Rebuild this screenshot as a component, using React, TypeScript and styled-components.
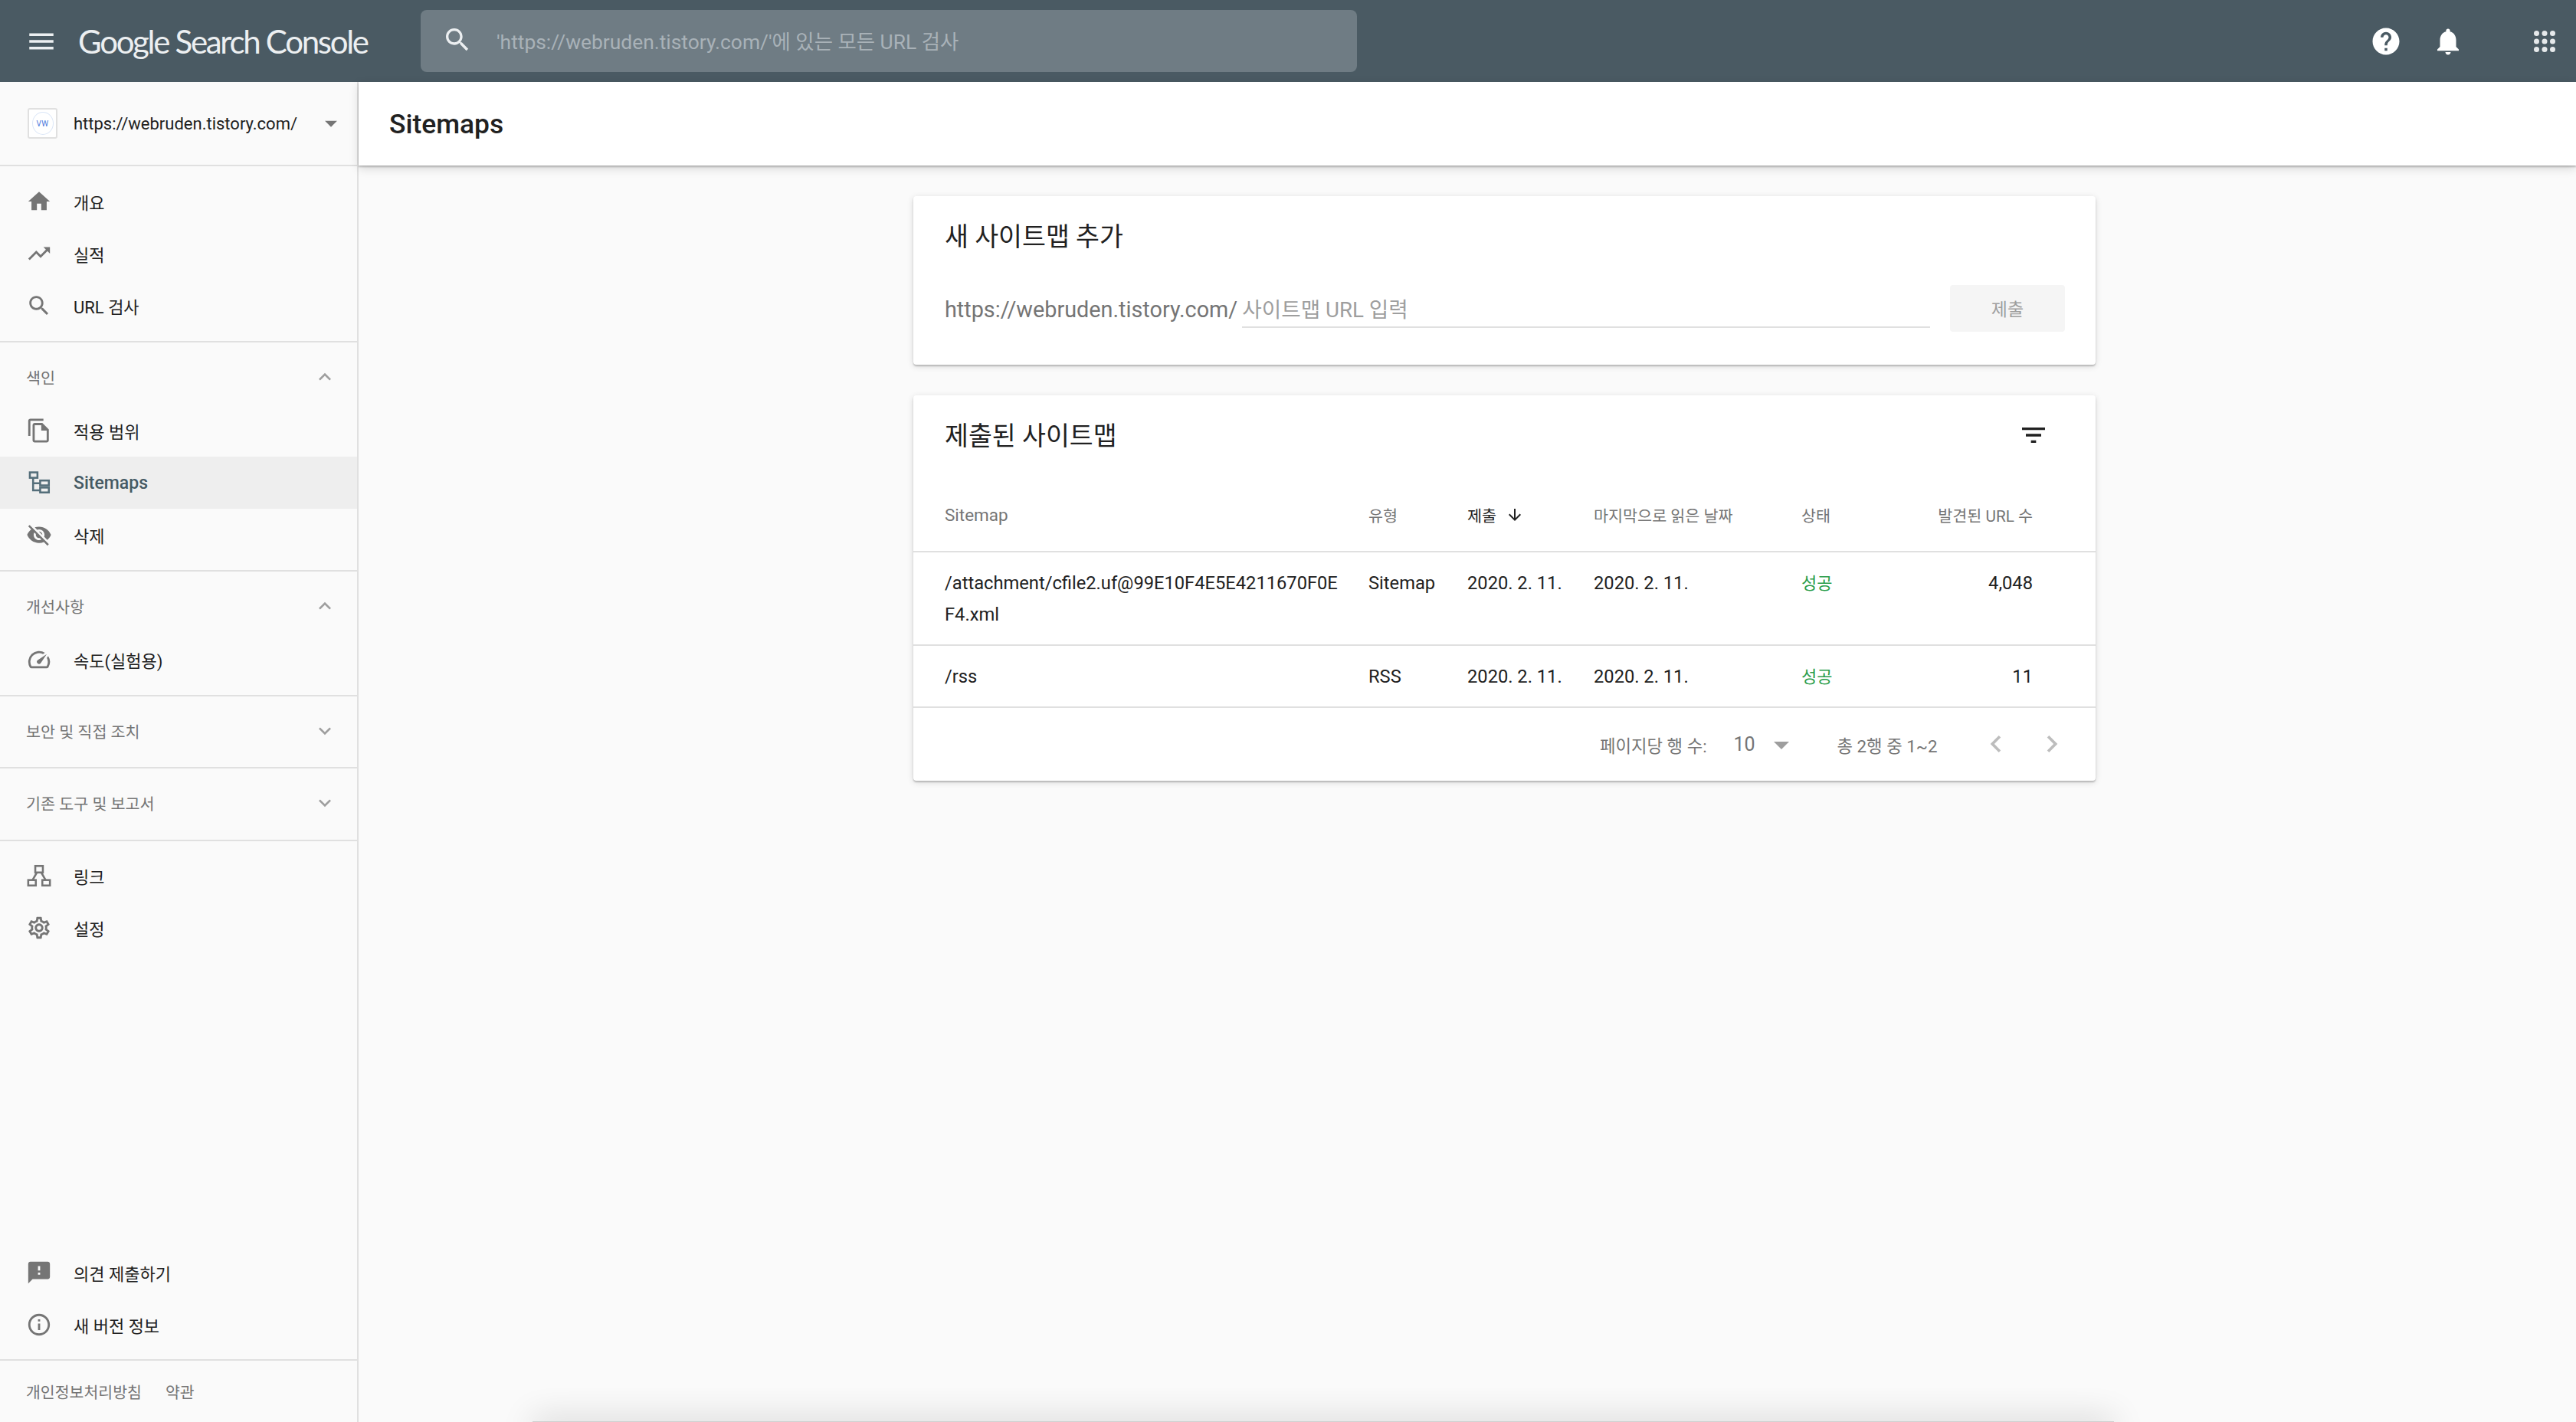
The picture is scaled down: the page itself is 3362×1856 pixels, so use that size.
import React from "react";
import styled, { createGlobalStyle } from "styled-components";

const Global = createGlobalStyle`
  html, body { margin: 0; padding: 0; background: #fafafa; overflow: hidden; }
  * { box-sizing: border-box; }
  body { font-family: Roboto, "Noto Sans CJK KR", sans-serif; color: #212121; }
`;

const P = {
  menu: "M3 18h18v-2H3v2zm0-5h18v-2H3v2zm0-7v2h18V6H3z",
  search: "M15.5 14h-.79l-.28-.27C15.41 12.59 16 11.11 16 9.5 16 5.91 13.09 3 9.5 3S3 5.91 3 9.5 5.91 16 9.5 16c1.61 0 3.09-.59 4.23-1.57l.27.28v.79l5 4.99L20.49 19l-4.99-5zm-6 0C7.01 14 5 11.99 5 9.5S7.01 5 9.5 5 14 7.01 14 9.5 11.99 14 9.5 14z",
  help: "M12 2C6.48 2 2 6.48 2 12s4.48 10 10 10 10-4.48 10-10S17.52 2 12 2zm1 17h-2v-2h2v2zm2.07-7.75l-.9.92C13.45 12.9 13 13.5 13 15h-2v-.5c0-1.1.45-2.1 1.17-2.83l1.24-1.26c.37-.36.59-.86.59-1.41 0-1.1-.9-2-2-2s-2 .9-2 2H8c0-2.21 1.79-4 4-4s4 1.79 4 4c0 .88-.36 1.68-.93 2.25z",
  bell: "M12 22c1.1 0 2-.9 2-2h-4c0 1.1.89 2 2 2zm6-6v-5c0-3.07-1.64-5.64-4.5-6.32V4c0-.83-.67-1.5-1.5-1.5s-1.5.67-1.5 1.5v.68C7.63 5.36 6 7.92 6 11v5l-2 2v1h16v-1l-2-2z",
  home: "M10 20v-6h4v6h5v-8h3L12 3 2 12h3v8z",
  trend: "M16 6l2.29 2.29-4.88 4.88-4-4L2 16.59 3.41 18l6-6 4 4 6.3-6.29L22 12V6z",
  copy: "M16 1H4c-1.1 0-2 .9-2 2v14h2V3h12V1zM15 5H8c-1.1 0-1.99.9-1.99 2L6 21c0 1.1.89 2 1.99 2H19c1.1 0 2-.9 2-2V11l-6-6zM8 21V7h6v5h5v9H8z",
  eyeOff: "M12 7c2.76 0 5 2.24 5 5 0 .65-.13 1.26-.36 1.83l2.92 2.92c1.51-1.26 2.7-2.89 3.43-4.75-1.73-4.39-6-7.5-11-7.5-1.4 0-2.74.25-3.98.7l2.16 2.16C10.74 7.13 11.35 7 12 7zM2 4.27l2.28 2.28.46.46C3.08 8.3 1.78 10.02 1 12c1.73 4.39 6 7.5 11 7.5 1.55 0 3.03-.3 4.38-.84l.42.42L19.73 22 21 20.73 3.27 3 2 4.27zM7.53 9.8l1.55 1.55c-.05.21-.08.43-.08.65 0 1.66 1.34 3 3 3 .22 0 .44-.03.65-.08l1.55 1.55c-.67.33-1.41.53-2.2.53-2.76 0-5-2.24-5-5 0-.79.2-1.53.53-2.2zm4.31-.78l3.15 3.15.02-.16c0-1.66-1.34-3-3-3l-.17.01z",
  speed: "M20.38 8.57l-1.23 1.85a8 8 0 0 1-.22 7.58H5.07A8 8 0 0 1 15.58 6.85l1.85-1.23A10 10 0 0 0 3.35 19a2 2 0 0 0 1.72 1h13.85a2 2 0 0 0 1.74-1 10 10 0 0 0-.27-10.44zm-9.79 6.84a2 2 0 0 0 2.83 0l5.66-8.49-8.49 5.66a2 2 0 0 0 0 2.83z",
  gear: "M19.43 12.98c.04-.32.07-.64.07-.98 0-.34-.03-.66-.07-.98l2.11-1.65c.19-.15.24-.42.12-.64l-2-3.46c-.09-.16-.26-.25-.44-.25-.06 0-.12.01-.17.03l-2.49 1c-.52-.4-1.08-.73-1.69-.98l-.38-2.65C14.46 2.18 14.25 2 14 2h-4c-.25 0-.46.18-.49.42l-.38 2.65c-.61.25-1.17.59-1.69.98l-2.49-1c-.06-.02-.12-.03-.18-.03-.17 0-.34.09-.43.25l-2 3.46c-.13.22-.07.49.12.64l2.11 1.65c-.04.32-.07.65-.07.98 0 .33.03.66.07.98l-2.11 1.65c-.19.15-.24.42-.12.64l2 3.46c.09.16.26.25.44.25.06 0 .12-.01.17-.03l2.49-1c.52.4 1.08.73 1.69.98l.38 2.65c.03.24.24.42.49.42h4c.25 0 .46-.18.49-.42l.38-2.65c.61-.25 1.17-.59 1.69-.98l2.49 1c.06.02.12.03.18.03.17 0 .34-.09.43-.25l2-3.46c.12-.22.07-.49-.12-.64l-2.11-1.65zm-1.98-1.71c.04.31.05.52.05.73 0 .21-.02.43-.05.73l-.14 1.13.89.7 1.08.84-.7 1.21-1.27-.51-1.04-.42-.9.68c-.43.32-.84.56-1.25.73l-1.06.43-.16 1.13-.2 1.35h-1.4l-.19-1.35-.16-1.13-1.06-.43c-.43-.18-.83-.41-1.23-.71l-.91-.7-1.06.43-1.27.51-.7-1.21 1.08-.84.89-.7-.14-1.13c-.03-.31-.05-.54-.05-.74s.02-.43.05-.73l.14-1.13-.89-.7-1.08-.84.7-1.21 1.27.51 1.04.42.9-.68c.43-.32.84-.56 1.25-.73l1.06-.43.16-1.13.2-1.35h1.39l.19 1.35.16 1.13 1.06.43c.43.18.83.41 1.23.71l.91.7 1.06-.43 1.27-.51.7 1.21-1.07.85-.89.7.14 1.13zM12 8c-2.21 0-4 1.79-4 4s1.79 4 4 4 4-1.79 4-4-1.79-4-4-4zm0 6c-1.1 0-2-.9-2-2s.9-2 2-2 2 .9 2 2-.9 2-2 2z",
  feedback: "M20 2H4c-1.1 0-1.99.9-1.99 2L2 22l4-4h14c1.1 0 2-.9 2-2V4c0-1.1-.9-2-2-2zm-7 12h-2v-2h2v2zm0-4h-2V6h2v4z",
  info: "M11 7h2v2h-2zm0 4h2v6h-2zm1-9C6.48 2 2 6.48 2 12s4.48 10 10 10 10-4.48 10-10S17.52 2 12 2zm0 18c-4.41 0-8-3.59-8-8s3.59-8 8-8 8 3.59 8 8-3.59 8-8 8z",
  less: "M12 8l-6 6 1.41 1.41L12 10.83l4.59 4.58L18 14z",
  more: "M16.59 8.59L12 13.17 7.41 8.59 6 10l6 6 6-6z",
  filter: "M10 18h4v-2h-4v2zM3 6v2h18V6H3zm3 7h12v-2H6v2z",
  down: "M20 12l-1.41-1.41L13 16.17V4h-2v12.17l-5.58-5.59L4 12l8 8 8-8z",
  left: "M15.41 7.41L14 6l-6 6 6 6 1.41-1.41L10.83 12z",
  right: "M10 6L8.59 7.41 13.17 12l-4.58 4.59L10 18l6-6z",
  drop: "M7 10l5 5 5-5z",
};

const Glyph = styled.svg<{ $size: number; $color: string }>`
  width: ${(p) => p.$size}px;
  height: ${(p) => p.$size}px;
  flex: none;
  display: block;
  fill: ${(p) => p.$color};
`;

const LineGlyph = styled.svg<{ $color: string }>`
  width: 34px;
  height: 34px;
  flex: none;
  display: block;
  fill: none;
  stroke: ${(p) => p.$color};
  stroke-width: 1.8;
`;

const Icon = ({ d, size = 34, color = "#757575" }: { d: string; size?: number; color?: string }) => (
  <Glyph viewBox="0 0 24 24" $size={size} $color={color}>
    <path d={d} />
  </Glyph>
);

const Page = styled.div`
  position: relative;
  width: 3362px;
  height: 1856px;
  display: flex;
  flex-direction: column;
  overflow: hidden;
  background: #fafafa;
`;

const TopBar = styled.header`
  height: 107px;
  flex: none;
  display: flex;
  align-items: center;
  background: #4a5a63;
  padding-left: 33px;
  padding-right: 20px;
`;

const Logo = styled.div`
  width: 447px;
  margin-left: 27px;
  font-family: Lato, Roboto, sans-serif;
  font-size: 42px;
  letter-spacing: -2.3px;
  color: #eceff1;
  white-space: nowrap;
  line-height: 1;
`;

const SearchBox = styled.div`
  width: 1222px;
  height: 81px;
  display: flex;
  align-items: center;
  gap: 31px;
  padding: 0 0 3px 28px;
  background: #6f7c84;
  border-radius: 8px;
  font-size: 26.4px;
  color: #a9b2b8;
`;

const TopActions = styled.div`
  margin-left: auto;
  display: flex;
  align-items: center;
`;

const TopAction = styled.div<{ $gap: number }>`
  margin-left: ${(p) => p.$gap}px;
  display: flex;
`;

const Body = styled.div`
  flex: 1;
  display: flex;
  min-height: 0;
`;

const Sidebar = styled.aside`
  width: 468px;
  flex: none;
  display: flex;
  flex-direction: column;
  border-right: 2px solid #e0e0e0;
  background: #fafafa;
`;

const SiteRow = styled.div`
  height: 110px;
  flex: none;
  display: flex;
  align-items: center;
  padding: 0 15px 0 36px;
  border-bottom: 2px solid #e0e0e0;
  font-size: 22px;
  color: #212121;
`;

const Favicon = styled.div`
  width: 39px;
  height: 40px;
  flex: none;
  display: flex;
  align-items: center;
  justify-content: center;
  margin-right: 21px;
  background: #fff;
  border: 2px solid #e0e0e0;
  border-radius: 3px;
`;

const FaviconBadge = styled.span`
  width: 28px;
  height: 30px;
  display: flex;
  align-items: center;
  justify-content: center;
  border: 1px solid #dbe6f7;
  border-radius: 50%;
  font-size: 10px;
  letter-spacing: 0.5px;
  color: #4a78dc;
`;

const SiteName = styled.span`
  flex: 1;
  white-space: nowrap;
`;

const NavSection = styled.nav<{ $top?: number; $bottom?: number; $bare?: boolean }>`
  flex: none;
  padding-top: ${(p) => p.$top ?? 0}px;
  padding-bottom: ${(p) => p.$bottom ?? 0}px;
  border-bottom: ${(p) => (p.$bare ? "none" : "2px solid #e0e0e0")};
`;

const NavItem = styled.div<{ $active?: boolean }>`
  height: 68px;
  display: flex;
  align-items: center;
  gap: 28px;
  padding-left: 34px;
  font-size: ${(p) => (p.$active ? 23 : 22)}px;
  font-weight: ${(p) => (p.$active ? 500 : 400)};
  color: ${(p) => (p.$active ? "#455a64" : "#212121")};
  background: ${(p) => (p.$active ? "#eeeeee" : "transparent")};
`;

const GroupHead = styled.div<{ $collapsed?: boolean }>`
  height: ${(p) => (p.$collapsed ? 92 : 81)}px;
  display: flex;
  align-items: center;
  justify-content: space-between;
  padding: ${(p) => (p.$collapsed ? "0 26px 2px 34px" : "9px 26px 0 34px")};
  font-size: 20.7px;
  color: #757575;
`;

const Grow = styled.div`
  flex: 1;
`;

const LegalRow = styled.div`
  flex: none;
  height: 80px;
  display: flex;
  align-items: center;
  gap: 31px;
  padding-left: 34px;
  font-size: 20.5px;
  color: #757575;
`;

const Main = styled.main`
  flex: 1;
  min-width: 0;
  display: flex;
  flex-direction: column;
`;

const TitleBar = styled.div`
  height: 109px;
  flex: none;
  display: flex;
  align-items: center;
  padding-left: 40px;
  background: #fff;
  box-shadow: 0 2px 2px rgba(0, 0, 0, 0.22), 0 4px 12px rgba(0, 0, 0, 0.14);
  font-size: 35.4px;
  font-weight: 500;
  color: #212121;
`;

const Content = styled.div`
  flex: 1;
  display: flex;
  flex-direction: column;
  gap: 40px;
  padding: 40px 0 0 724px;
`;

const Card = styled.section`
  width: 1543px;
  background: #fff;
  border-radius: 4px;
  box-shadow: 0 2px 2px rgba(0, 0, 0, 0.2), 0 2px 8px rgba(0, 0, 0, 0.14);
`;

const AddCard = styled(Card)`
  height: 220px;
  padding: 32px 40px 0 41px;
`;

const CardTitle = styled.h2`
  margin: 0;
  font-size: 33.6px;
  line-height: 44px;
  font-weight: 400;
  color: #212121;
`;

const AddRow = styled.div`
  display: flex;
  align-items: flex-end;
  margin-top: 40px;
  height: 61px;
`;

const UrlPrefix = styled.span`
  font-size: 28.8px;
  line-height: 50px;
  color: #757575;
  margin-right: 6px;
  margin-bottom: 4px;
`;

const UrlInput = styled.div`
  flex: 1;
  height: 56px;
  line-height: 52px;
  padding-top: 7px;
  margin-right: 26px;
  margin-bottom: 5px;
  border-bottom: 2px solid #e0e0e0;
  font-size: 27.7px;
  color: #9e9e9e;
`;

const SubmitButton = styled.div`
  width: 150px;
  height: 61px;
  display: flex;
  align-items: center;
  justify-content: center;
  padding-bottom: 2px;
  background: #f5f5f5;
  border-radius: 4px;
  font-size: 23px;
  color: #9e9e9e;
`;

const ListHead = styled.div`
  height: 106px;
  display: flex;
  align-items: center;
  justify-content: space-between;
  padding: 2px 61px 0 41px;
`;

const FilterSlot = styled.div`
  margin-top: -4px;
`;

const COLS = "553px 129px 165px 271px 150px 152px";

const HeadRow = styled.div`
  display: grid;
  grid-template-columns: ${COLS};
  align-items: center;
  height: 99px;
  padding: 2px 0 0 41px;
  border-bottom: 2px solid #e0e0e0;
  font-size: 20.7px;
  color: #757575;
`;

const HeadCell = styled.div<{ $sorted?: boolean; $end?: boolean; $latin?: boolean }>`
  display: flex;
  align-items: center;
  gap: 12px;
  justify-content: ${(p) => (p.$end ? "flex-end" : "flex-start")};
  color: ${(p) => (p.$sorted ? "#212121" : "#757575")};
  font-size: ${(p) => (p.$latin ? "22.5px" : "inherit")};
`;

const DataRow = styled.div`
  display: grid;
  grid-template-columns: ${COLS};
  padding: 20px 0 18px 41px;
  border-bottom: 2px solid #e0e0e0;
  font-size: 23.7px;
  line-height: 41px;
  color: #212121;
`;

const PathCell = styled.div`
  word-break: break-all;
  padding-right: 33px;
`;

const StatusCell = styled.div`
  font-size: 22px;
  color: #2a9d4a;
`;

const CountCell = styled.div`
  text-align: right;
`;

const Pager = styled.div`
  height: 95px;
  display: flex;
  align-items: center;
  padding-left: 896px;
  font-size: 22.3px;
  color: #757575;
`;

const PagerValue = styled.span`
  margin-left: 35px;
  width: 38px;
  font-size: 25px;
`;

const PagerCount = styled.span`
  margin-left: 49px;
`;

const PagerNav = styled.div`
  display: flex;
  margin-left: 55px;
  margin-top: -2px;
  gap: 29px;
`;

const OffscreenEdge = styled.div`
  position: absolute;
  left: 695px;
  width: 2064px;
  top: 1855px;
  height: 20px;
  background: #d0d0d0;
  box-shadow: 0 -2px 44px rgba(0, 0, 0, 0.2);
`;

const topItems = [
  { d: P.home, label: "개요" },
  { d: P.trend, label: "실적" },
  { d: P.search, label: "URL 검사" },
];

const rows = [
  { path: "/attachment/cfile2.uf@99E10F4E5E4211670F0EF4.xml", type: "Sitemap", count: "4,048" },
  { path: "/rss", type: "RSS", count: "11" },
];

const SitemapGlyph = () => (
  <LineGlyph viewBox="0 0 24 24" $color="#546e7a">
    <rect x="3.5" y="2.5" width="7" height="5" />
    <rect x="13" y="10" width="8" height="4.5" />
    <rect x="13" y="16.5" width="8" height="4.5" />
    <path d="M6.5 7.5V19H13M6.5 12.5H13" />
  </LineGlyph>
);

const LinksGlyph = () => (
  <LineGlyph viewBox="0 0 24 24" $color="#757575">
    <rect x="8.5" y="3" width="7" height="6" />
    <rect x="2" y="16" width="7" height="5" />
    <rect x="15" y="16" width="7" height="5" />
    <path d="M10 9l-4 7M14 9l4 7" />
  </LineGlyph>
);

const AppsGlyph = () => (
  <Glyph viewBox="0 0 24 24" $size={42} $color="#e6e9eb">
    {[6, 12, 18].flatMap((y) =>
      [6, 12, 18].map((x) => <circle key={`${x}-${y}`} cx={x} cy={y} r="2" />)
    )}
  </Glyph>
);

export default function App() {
  return (
    <Page>
      <Global />
      <TopBar>
        <Icon d={P.menu} size={42} color="#eceff1" />
        <Logo>Google Search Console</Logo>
        <SearchBox>
          <Icon d={P.search} size={40} color="#eceff1" />
          <span>'https://webruden.tistory.com/'에 있는 모든 URL 검사</span>
        </SearchBox>
        <TopActions>
          <TopAction $gap={0}>
            <Icon d={P.help} size={42} color="#fff" />
          </TopAction>
          <TopAction $gap={39}>
            <Icon d={P.bell} size={42} color="#fff" />
          </TopAction>
          <TopAction $gap={84}>
            <AppsGlyph />
          </TopAction>
        </TopActions>
      </TopBar>
      <Body>
        <Sidebar>
          <SiteRow>
            <Favicon>
              <FaviconBadge>VW</FaviconBadge>
            </Favicon>
            <SiteName>https://webruden.tistory.com/</SiteName>
            <Icon d={P.drop} size={38} />
          </SiteRow>
          <NavSection $top={12} $bottom={12}>
            {topItems.map((g) => (
              <NavItem key={g.label}>
                <Icon d={g.d} />
                {g.label}
              </NavItem>
            ))}
          </NavSection>
          <NavSection $bottom={12}>
            <GroupHead>
              색인
              <Icon d={P.less} size={32} color="#9e9e9e" />
            </GroupHead>
            <NavItem>
              <Icon d={P.copy} />
              적용 범위
            </NavItem>
            <NavItem $active>
              <SitemapGlyph />
              Sitemaps
            </NavItem>
            <NavItem>
              <Icon d={P.eyeOff} />
              삭제
            </NavItem>
          </NavSection>
          <NavSection $bottom={12}>
            <GroupHead>
              개선사항
              <Icon d={P.less} size={32} color="#9e9e9e" />
            </GroupHead>
            <NavItem>
              <Icon d={P.speed} />
              속도(실험용)
            </NavItem>
          </NavSection>
          <NavSection>
            <GroupHead $collapsed>
              보안 및 직접 조치
              <Icon d={P.more} size={32} color="#9e9e9e" />
            </GroupHead>
          </NavSection>
          <NavSection $bottom={1}>
            <GroupHead $collapsed>
              기존 도구 및 보고서
              <Icon d={P.more} size={32} color="#9e9e9e" />
            </GroupHead>
          </NavSection>
          <NavSection $top={11} $bare>
            <NavItem>
              <LinksGlyph />
              링크
            </NavItem>
            <NavItem>
              <Icon d={P.gear} />
              설정
            </NavItem>
          </NavSection>
          <Grow />
          <NavSection $bottom={11}>
            <NavItem>
              <Icon d={P.feedback} />
              의견 제출하기
            </NavItem>
            <NavItem>
              <Icon d={P.info} />새 버전 정보
            </NavItem>
          </NavSection>
          <LegalRow>
            <span>개인정보처리방침</span>
            <span>약관</span>
          </LegalRow>
        </Sidebar>
        <Main>
          <TitleBar>Sitemaps</TitleBar>
          <Content>
            <AddCard>
              <CardTitle>새 사이트맵 추가</CardTitle>
              <AddRow>
                <UrlPrefix>https://webruden.tistory.com/</UrlPrefix>
                <UrlInput>사이트맵 URL 입력</UrlInput>
                <SubmitButton>제출</SubmitButton>
              </AddRow>
            </AddCard>
            <Card>
              <ListHead>
                <CardTitle>제출된 사이트맵</CardTitle>
                <FilterSlot>
                  <Icon d={P.filter} size={40} color="#212121" />
                </FilterSlot>
              </ListHead>
              <HeadRow>
                <HeadCell $latin>Sitemap</HeadCell>
                <HeadCell>유형</HeadCell>
                <HeadCell $sorted>
                  제출
                  <Icon d={P.down} size={24} color="#212121" />
                </HeadCell>
                <HeadCell>마지막으로 읽은 날짜</HeadCell>
                <HeadCell>상태</HeadCell>
                <HeadCell $end>발견된 URL 수</HeadCell>
              </HeadRow>
              {rows.map((r) => (
                <DataRow key={r.path}>
                  <PathCell>{r.path}</PathCell>
                  <div>{r.type}</div>
                  <div>2020. 2. 11.</div>
                  <div>2020. 2. 11.</div>
                  <StatusCell>성공</StatusCell>
                  <CountCell>{r.count}</CountCell>
                </DataRow>
              ))}
              <Pager>
                <span>페이지당 행 수:</span>
                <PagerValue>10</PagerValue>
                <Icon d={P.drop} size={48} color="#9e9e9e" />
                <PagerCount>총 2행 중 1~2</PagerCount>
                <PagerNav>
                  <Icon d={P.left} size={44} color="#bdbdbd" />
                  <Icon d={P.right} size={44} color="#bdbdbd" />
                </PagerNav>
              </Pager>
            </Card>
          </Content>
        </Main>
      </Body>
      <OffscreenEdge />
    </Page>
  );
}
